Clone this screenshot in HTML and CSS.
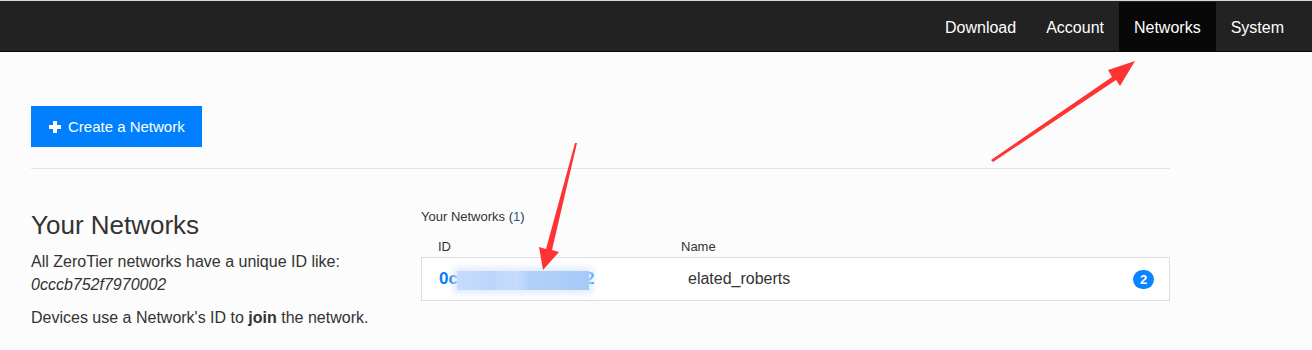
FILE: index.html
```html
<!DOCTYPE html>
<html lang="en">
<head>
    <meta charset="UTF-8">
    <title>ZeroTier - Networks</title>
    <link rel="stylesheet" href="styles.css">
</head>
<body>
    <!-- Top navigation -->
    <nav class="navbar">
        <ul class="nav-links">
            <li><a href="#">Download</a></li>
            <li><a href="#">Account</a></li>
            <li class="active"><a href="#">Networks</a></li>
            <li><a href="#">System</a></li>
        </ul>
    </nav>

    <div class="container">
        <button class="create-button">
            <svg class="plus" width="12" height="12" viewBox="0 0 12 12"><path d="M4 0h4v4h4v4H8v4H4V8H0V4h4z" fill="#fff"/></svg>
            Create a Network
        </button>

        <hr class="divider">

        <div class="networks">
            <!-- Intro -->
            <div class="intro">
                <h3 class="intro-title">Your Networks</h3>
                <p>All ZeroTier networks have a unique ID like:<br><em>0cccb752f7970002</em></p>
                <p>Devices use a Network's ID to <b>join</b> the network.</p>
            </div>

            <!-- Network list -->
            <div class="list">
                <div class="list-title">Your Networks (<span class="count">1</span>)</div>
                <div class="list-head">
                    <span class="col-id">ID</span>
                    <span class="col-name">Name</span>
                </div>
                <div class="list-row">
                    <span class="col-id net-id">0c<span class="blurred"></span>2</span>
                    <span class="col-name net-name">elated_roberts</span>
                    <span class="badge">2</span>
                </div>
            </div>
        </div>
    </div>

    <!-- Annotation arrows -->
    <svg class="arrows" width="1312" height="350" viewBox="0 0 1312 350">
        <polygon points="991,160 1112,77 1108,70 1135,61 1120,86 1116,80 993,162" fill="#ff3333"/>
        <polygon points="577,143 552,250 559,252 543,270 539,247 546,249 575,143" fill="#ff3333"/>
    </svg>
</body>
</html>
```

FILE: styles.css
```css
/* Reset */
html, body {
    margin: 0;
    padding: 0;
}

body {
    font-family: "Liberation Sans", Arial, sans-serif;
    font-size: 16px;
    color: #333;
    background: #fcfcfc;
    border-top: 1px solid #d8d8d8;
    height: 349px;
    overflow: hidden;
    position: relative;
}

/* Navbar */
.navbar {
    height: 50px;
    background: #222;
    border-bottom: 1px solid #080808;
    display: flex;
    justify-content: flex-end;
    padding-right: 13px;
}

.nav-links {
    list-style: none;
    margin: 0;
    padding: 0;
    display: flex;
}

.nav-links a {
    display: block;
    padding: 16px 15px 14px;
    line-height: 20px;
    color: #fff;
    text-decoration: none;
    margin-top: 1px;
    height: 19px;
}

.nav-links .active a {
    background: #080808;
}

/* Main container */
.container {
    width: 1139px;
    margin-left: 31px;
    padding-top: 54px;
}

.create-button {
    display: flex;
    align-items: center;
    gap: 7px;
    height: 41px;
    padding: 0 17px 0 18px;
    border: none;
    background: #0080ff;
    color: #fff;
    font-family: inherit;
    font-size: 15px;
    cursor: pointer;
}

.plus {
    margin-top: 1px;
}

.divider {
    border: none;
    border-top: 1px solid #e3e3e3;
    margin: 21px 0 0;
}

/* Networks section */
.networks {
    display: grid;
    grid-template-columns: 390px 1fr;
}

.intro-title {
    font-size: 26px;
    font-weight: normal;
    margin: 41px 0 10px;
    line-height: 30px;
}

.intro p {
    margin: 0 0 10px;
    line-height: 23px;
}

.list {
    padding-top: 40px;
}

.list-title {
    font-size: 13px;
    line-height: 16px;
    color: #333;
}

.count {
    color: #1a5a9a;
}

.list-head {
    display: flex;
    font-size: 13px;
    line-height: 16px;
    margin-top: 14px;
    padding-bottom: 2px;
}

.col-id {
    width: 243px;
    padding-left: 17px;
}

.list-row {
    display: flex;
    align-items: center;
    height: 42px;
    background: #fff;
    border: 1px solid #ddd;
}

.net-id {
    color: #0a7bf5;
    font-weight: bold;
    font-size: 17px;
    display: flex;
    align-items: center;
}

.blurred {
    display: inline-block;
    width: 132px;
    height: 19px;
    margin: 0 -4px 0 -1px;
    position: relative;
    top: 1px;
    background: linear-gradient(90deg, #c7dcfd 0%, #bcd6fb 25%, #c6dcfc 45%, #b3d0fa 55%, #a7c9f8 100%);
    box-shadow: 0 0 6px 4px rgba(220, 232, 252, 0.8);
}

.net-name {
    flex: 1;
    padding-left: 6px;
}

.badge {
    width: 21px;
    height: 19px;
    line-height: 19px;
    border-radius: 10px;
    background: #0a84ff;
    color: #fff;
    font-size: 13px;
    font-weight: bold;
    text-align: center;
    margin-right: 15px;
}

/* Annotation overlay */
.arrows {
    position: absolute;
    top: -1px;
    left: 0;
    pointer-events: none;
}
```
